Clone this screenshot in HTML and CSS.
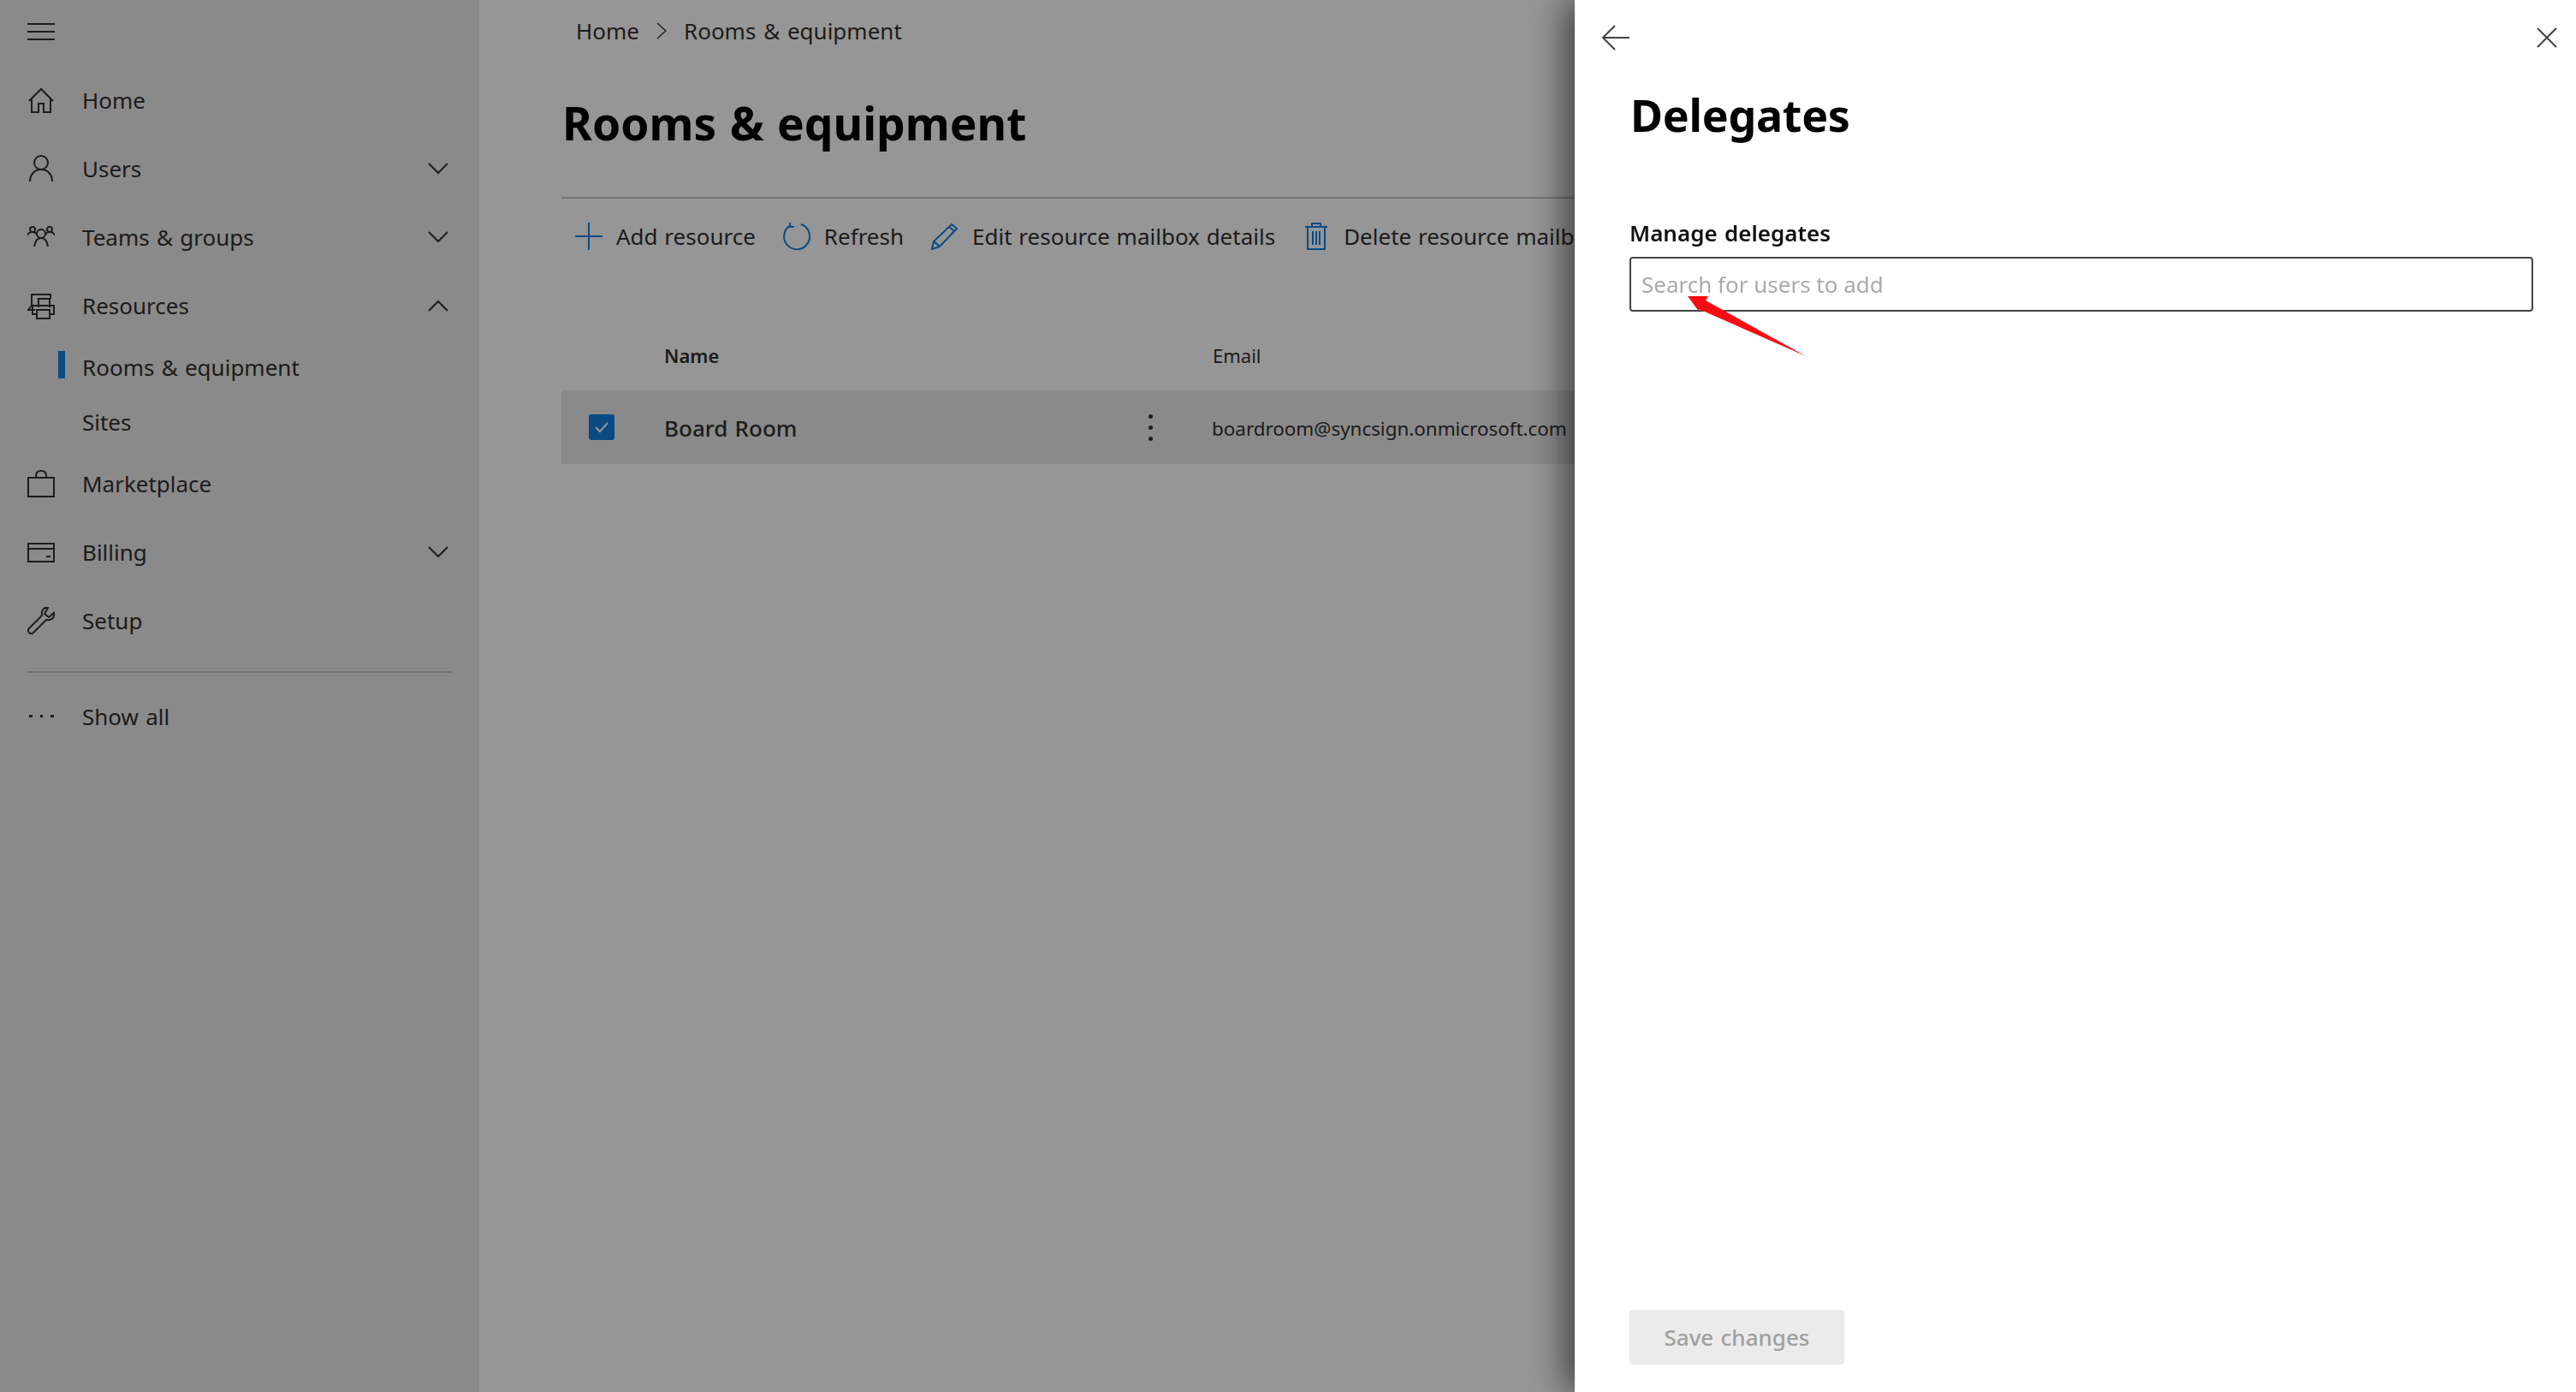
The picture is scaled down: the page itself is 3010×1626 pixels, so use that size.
FILE: index.html
```html
<!DOCTYPE html>
<html lang="en">
<head>
  <meta charset="UTF-8">
  <meta name="viewport" content="width=device-width, initial-scale=1.0">
  <title>Rooms &amp; equipment</title>
  <link rel="stylesheet" href="styles.css">
</head>
<body>
  <!-- Left navigation -->
  <nav class="sidebar">
    <div class="menu-row">
      <svg class="icon" viewBox="0 0 32 32"><path d="M0 7H32M0 16H32M0 25H32"/></svg>
    </div>
    <a class="nav-item">
      <svg class="icon" viewBox="0 0 32 32"><path d="M2 17L16 3L30 17M5 14V30H13V20H19V30H27V14"/></svg>
      <span>Home</span>
    </a>
    <a class="nav-item">
      <svg class="icon" viewBox="0 0 32 32"><circle cx="16" cy="9" r="8"/><path d="M3 31C3 23 8 17 16 17S29 23 29 31"/></svg>
      <span>Users</span>
      <svg class="chevron" viewBox="0 0 24 14"><path d="M1 1L12 12L23 1"/></svg>
    </a>
    <a class="nav-item">
      <svg class="icon" viewBox="0 0 32 32"><circle cx="16" cy="12" r="5"/><path d="M8 27C9 21 12 17 16 17S23 21 24 27"/><circle cx="6" cy="7" r="3"/><circle cx="26" cy="7" r="3"/><path d="M0 14C1 11 3 10 6 10S10 11 11 13M21 13C22 11 24 10 26 10S31 11 32 14"/></svg>
      <span>Teams &amp; groups</span>
      <svg class="chevron" viewBox="0 0 24 14"><path d="M1 1L12 12L23 1"/></svg>
    </a>
    <a class="nav-item">
      <svg class="icon" viewBox="0 0 32 32"><path d="M5 16V3H27V8M5 16L1 21H9"/><path d="M13 18V8H26V18M10 26H6V16H31V26H27M11 21H26V31H11V21Z"/></svg>
      <span>Resources</span>
      <svg class="chevron" viewBox="0 0 24 14"><path d="M1 13L12 2L23 13"/></svg>
    </a>
    <a class="nav-item sub-item active"><span>Rooms &amp; equipment</span></a>
    <a class="nav-item sub-item"><span>Sites</span></a>
    <a class="nav-item">
      <svg class="icon" viewBox="0 0 32 32"><path d="M1 9H31V31H1V9ZM10 9V7C10 3 12 1 16 1S22 3 22 7V9"/></svg>
      <span>Marketplace</span>
    </a>
    <a class="nav-item">
      <svg class="icon" viewBox="0 0 32 32"><path d="M1 6H31V27H1V6ZM1 12H31M22 21H27"/></svg>
      <span>Billing</span>
      <svg class="chevron" viewBox="0 0 24 14"><path d="M1 1L12 12L23 1"/></svg>
    </a>
    <a class="nav-item">
      <svg class="icon" viewBox="0 0 32 32"><path d="M24 1C19 0 16 4 17 10L2 25C0 27 1 29 2 30S5 32 7 30L22 15C28 16 32 13 31 7L25 12L20 8L24 1Z"/></svg>
      <span>Setup</span>
    </a>
    <div class="nav-divider"></div>
    <a class="nav-item">
      <svg class="icon" viewBox="0 0 32 32"><path class="dots" d="M2 14h4v3h-4zM15 14h3v3h-3zM27 14h4v3h-4z"/></svg>
      <span>Show all</span>
    </a>
  </nav>

  <!-- Page behind the panel -->
  <main class="content">
    <div class="breadcrumb">
      <span>Home</span>
      <svg class="crumb-sep" viewBox="0 0 12 20"><path d="M1 1L11 10L1 19"/></svg>
      <span>Rooms &amp; equipment</span>
    </div>
    <h1 class="page-title">Rooms &amp; equipment</h1>
    <div class="toolbar">
      <div class="tool">
        <svg class="icon blue" viewBox="0 0 32 32"><path d="M16 0V32M0 16H32"/></svg>
        <span>Add resource</span>
      </div>
      <div class="tool">
        <svg class="icon blue" viewBox="0 0 32 32"><path d="M9 3A15 15 0 1 0 21 2M8 0V5H13"/></svg>
        <span>Refresh</span>
      </div>
      <div class="tool">
        <svg class="icon blue" viewBox="0 0 32 32"><path d="M24 2L30 7L10 28L1 31L3 22L24 2ZM21 5L27 10M3 22L10 28"/></svg>
        <span>Edit resource mailbox details</span>
      </div>
      <div class="tool">
        <svg class="icon blue" viewBox="0 0 32 32"><path d="M3 5H29M11 5V1H21V5M6 5V31H26V5M12 10V26M16 10V26M20 10V26"/></svg>
        <span>Delete resource mailbox</span>
      </div>
    </div>
    <div class="table-head">
      <span class="col-name">Name</span>
      <span class="col-email">Email</span>
    </div>
    <div class="table-row">
      <span class="checkbox">
        <svg viewBox="0 0 30 30"><path d="M8 15L13 20L22 10"/></svg>
      </span>
      <span class="row-name">Board Room</span>
      <span class="row-dots"><i></i><i></i><i></i></span>
      <span class="row-email">boardroom@syncsign.onmicrosoft.com</span>
    </div>
  </main>

  <div class="scrim"></div>

  <!-- Delegates panel -->
  <aside class="panel">
    <div class="panel-top">
      <svg class="panel-icon" viewBox="0 0 32 30"><path d="M15 1L1 15L15 29M1 15H32"/></svg>
      <svg class="panel-icon close" viewBox="0 0 24 24"><path d="M1 1L23 23M23 1L1 23"/></svg>
    </div>
    <div class="panel-body">
      <h2 class="panel-title">Delegates</h2>
      <label class="field-label" for="search">Manage delegates</label>
      <input class="search-input" id="search" type="text" placeholder="Search for users to add">
    </div>
    <div class="panel-foot">
      <button class="save-btn" disabled>Save changes</button>
    </div>
  </aside>

  <!-- Red annotation arrow -->
  <svg class="annotation" viewBox="0 0 140 72"><path d="M0 0L24 0L21 5L138 70L13 15L14 19Z"/></svg>
</body>
</html>
```

FILE: styles.css
```css
/* General body styling */
html, body {
  height: 100%;
}

body {
  margin: 0;
  display: flex;
  overflow: hidden;
  background-color: white;
  color: #323130;
  font-family: "Noto Sans", "Open Sans", sans-serif;
  font-size: 26px;
  word-spacing: 1.5px;
}

/* Sidebar */
.sidebar {
  width: 560px;
  flex-shrink: 0;
  background-color: #eaeaea;
  display: flex;
  flex-direction: column;
  box-sizing: border-box;
}

.menu-row {
  height: 77px;
  padding: 0 32px 4px;
  display: flex;
  align-items: center;
  box-sizing: border-box;
}

.nav-item {
  height: 80px;
  padding: 0 36px 0 32px;
  display: flex;
  align-items: center;
  gap: 32px;
  position: relative;
}

.nav-item span {
  flex: 1;
}

.sub-item {
  height: 64px;
  padding-left: 96px;
}

.active::before {
  content: "";
  position: absolute;
  left: 68px;
  top: 13px;
  width: 8px;
  height: 32px;
  background-color: #0f80e0;
}

.nav-divider {
  height: 2px;
  margin: 19px 32px 11px;
  background-color: #c4c4c4;
}

/* Icons */
.icon {
  width: 32px;
  height: 32px;
  flex-shrink: 0;
  fill: none;
  stroke: #323130;
  stroke-width: 2;
}

.icon .dots {
  fill: #323130;
  stroke: none;
}

.icon.blue {
  stroke: #0f80e0;
}

.chevron {
  width: 24px;
  height: 14px;
  fill: none;
  stroke: #323130;
  stroke-width: 2;
}

/* Main content */
.content {
  flex: 1;
  min-width: 0;
  padding-left: 96px;
  overflow: hidden;
  background-color: white;
}

.breadcrumb {
  height: 72px;
  padding-left: 17px;
  display: flex;
  align-items: center;
  gap: 20px;
  word-spacing: 2px;
}

.crumb-sep {
  width: 12px;
  height: 20px;
  fill: none;
  stroke: #323130;
  stroke-width: 1.5;
}

.page-title {
  margin: 0;
  height: 158px;
  padding-left: 1px;
  line-height: 143px;
  font-size: 53.3px;
  font-weight: 700;
  color: black;
}

.toolbar {
  height: 88px;
  padding-left: 16px;
  border-top: 2px solid #c4c4c4;
  display: flex;
  align-items: center;
  gap: 32px;
  white-space: nowrap;
  word-spacing: 1px;
}

.tool {
  display: flex;
  align-items: center;
  gap: 16px;
}

.table-head {
  height: 136px;
  padding-top: 54px;
  display: flex;
  align-items: center;
  box-sizing: border-box;
  font-size: 22px;
}

.col-name {
  margin-left: 120px;
  width: 641px;
  font-weight: 600;
}

.table-row {
  height: 86px;
  background-color: #eaeaea;
  display: flex;
  align-items: center;
  white-space: nowrap;
}

.checkbox {
  width: 30px;
  height: 30px;
  margin-left: 32px;
  background-color: #0f80e0;
  border-radius: 3px;
  flex-shrink: 0;
}

.checkbox svg {
  display: block;
  fill: none;
  stroke: white;
  stroke-width: 2;
}

.row-name {
  margin-left: 58px;
  padding-top: 2px;
  width: 566px;
  flex-shrink: 0;
  font-weight: 500;
}

.row-dots {
  width: 6px;
  margin-right: 68px;
  display: flex;
  flex-direction: column;
  gap: 8px;
  flex-shrink: 0;
}

.row-dots i {
  width: 5px;
  height: 5px;
  background-color: #323130;
  border-radius: 50%;
}

.row-email {
  padding-top: 2px;
  font-size: 22.4px;
  word-spacing: 0;
}

/* Dim layer behind the panel */
.scrim {
  position: fixed;
  inset: 0;
  background-color: rgba(0, 0, 0, 0.41);
}

/* Delegates panel */
.panel {
  position: fixed;
  top: 0;
  right: 0;
  bottom: 0;
  width: 1170px;
  background-color: white;
  box-shadow: -10px 0 40px rgba(0, 0, 0, 0.6);
  display: flex;
  flex-direction: column;
}

.panel-top {
  padding: 29px 22px 0 32px;
  display: flex;
  justify-content: space-between;
  align-items: center;
}

.panel-icon {
  width: 32px;
  height: 30px;
  fill: none;
  stroke: #444;
  stroke-width: 2;
}

.panel-icon.close {
  width: 24px;
  height: 24px;
}

.panel-body {
  flex: 1;
  padding: 0 50px 0 64px;
  display: flex;
  flex-direction: column;
}

.panel-title {
  margin: 0;
  height: 193px;
  padding-left: 1px;
  line-height: 149px;
  font-size: 52px;
  font-weight: 700;
  letter-spacing: -0.3px;
  color: black;
}

.field-label {
  height: 48px;
  line-height: 40px;
  font-weight: 600;
  color: #111;
}

.search-input {
  height: 64px;
  padding: 0 12px;
  border: 2px solid #444;
  border-radius: 4px;
  box-sizing: border-box;
  font-family: inherit;
  font-size: 26px;
  outline: none;
}

.search-input::placeholder {
  color: #aaaaaa;
  opacity: 1;
}

.panel-foot {
  padding: 0 0 32px 64px;
}

.save-btn {
  width: 251px;
  height: 64px;
  border: none;
  border-radius: 4px;
  background-color: #ebebeb;
  color: #a0a0a0;
  font-family: inherit;
  font-size: 26px;
  font-weight: 500;
  word-spacing: 1.5px;
}

/* Annotation over the input */
.annotation {
  position: fixed;
  left: 1972px;
  top: 346px;
  width: 140px;
  height: 72px;
  fill: #ff0a14;
}
```
